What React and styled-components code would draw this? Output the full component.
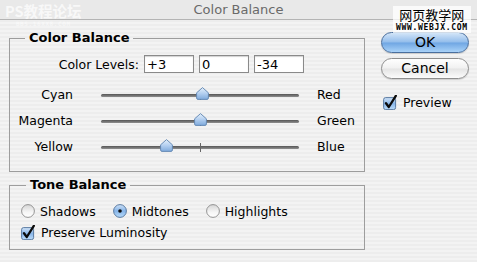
import React from 'react';
import styled, { createGlobalStyle } from 'styled-components';

const GlobalStyle = createGlobalStyle`
  html, body { margin: 0; padding: 0; }
  body { font-family: "DejaVu Sans", "Noto Sans CJK SC", sans-serif; }
`;

const Window = styled.div`
  position: relative;
  width: 477px;
  height: 262px;
  overflow: hidden;
  background: repeating-linear-gradient(to bottom, #ededed 0 2px, #f3f3f3 2px 4px);
  font-size: 12.5px;
  color: #000;
`;

const TitleBar = styled.div`
  height: 19px;
  border-bottom: 1px solid #b4b4b4;
  background: #e9e9e9;
  display: flex;
  align-items: center;
  justify-content: center;
  font-size: 13px;
  color: #6a6a6a;
`;

const Body = styled.div`
  display: flex;
  gap: 16px;
  padding: 10px 0 0 9px;
`;

const MainColumn = styled.div`
  width: 356px;
  display: flex;
  flex-direction: column;
  gap: 5px;
`;

const Group = styled.fieldset`
  margin: 0;
  min-width: 0;
  border: 1px solid #9d9d9d;
  padding: ${(p) => p.$pad};
`;

const GroupTitle = styled.legend`
  margin-left: ${(p) => p.$indent}px;
  padding: 0 4px;
  font-weight: bold;
  font-size: 13px;
  line-height: 16px;
`;

const LevelsRow = styled.div`
  display: grid;
  grid-template-columns: 129px 50px 50px 50px;
  column-gap: 5px;
  align-items: center;
  height: 18px;
  margin-bottom: 8px;
`;

const LevelsLabel = styled.span`
  justify-self: end;
`;

const LevelInput = styled.input`
  box-sizing: border-box;
  width: 50px;
  height: 18px;
  margin: 0;
  padding: 0 2px;
  border: 1px solid #8a8a8a;
  box-shadow: inset 0 1px 1px rgba(0, 0, 0, 0.18);
  background: #fff;
  font: inherit;
  font-size: 13px;
  color: #000;
  outline: none;
`;

const SliderRow = styled.div`
  display: flex;
  align-items: center;
  height: 26px;
`;

const SideLabel = styled.span`
  width: 63px;
  text-align: right;
`;

const Track = styled.div`
  position: relative;
  width: 198px;
  height: 3px;
  margin: 2px 0 0 28px;
  border-radius: 2px;
  background: linear-gradient(#555, #8f8f8f);
`;

const Tick = styled.span`
  position: absolute;
  left: 99px;
  top: -3px;
  width: 1px;
  height: 9px;
  background: #666;
`;

const ThumbWrap = styled.span`
  position: absolute;
  top: -7px;
  width: 13px;
  height: 13px;
  display: block;
`;

const ColorName = styled.span`
  margin-left: 18px;
`;

const OptionRow = styled.div`
  display: flex;
  align-items: center;
  gap: ${(p) => p.$gap || 0}px;
  height: 14px;
  margin-bottom: ${(p) => p.$below || 0}px;
  padding-left: ${(p) => p.$indent || 0}px;
`;

const Option = styled.label`
  display: flex;
  align-items: center;
  gap: 5px;
`;

const SideColumn = styled.div`
  width: 88px;
  display: flex;
  flex-direction: column;
  padding-top: 2px;
`;

const AquaButton = styled.button`
  box-sizing: border-box;
  width: 88px;
  height: 21px;
  margin: 0 0 5px;
  padding: 0;
  border-radius: 11px;
  font-family: inherit;
  font-size: 14px;
  line-height: 19px;
  color: #000;
  border: 1px solid ${(p) => (p.$primary ? '#4a6f9e' : '#8e8e8e')};
  background: ${(p) =>
    p.$primary
      ? 'linear-gradient(#d3e5f8 0%, #93bdeb 48%, #6fa6e3 52%, #a9d2f8 100%)'
      : 'linear-gradient(#ffffff 0%, #f1f1f1 48%, #e4e4e4 52%, #fbfbfb 100%)'};
  box-shadow: 0 1px 1px rgba(0, 0, 0, 0.15);
`;

const PreviewRow = styled.div`
  margin-top: 11px;
  padding-left: 2px;
`;

const Watermark = styled.div`
  position: absolute;
  top: ${(p) => p.$top}px;
  left: ${(p) => p.$left}px;
  display: flex;
  flex-direction: column;
  align-items: center;
  line-height: 1;
`;

const WatermarkCn = styled.span`
  font-family: "Noto Sans CJK SC", sans-serif;
  font-size: ${(p) => p.$size}px;
  font-weight: ${(p) => p.$weight || 400};
  line-height: ${(p) => p.$line || p.$size}px;
  color: ${(p) => p.$color};
`;

const WatermarkUrl = styled.span`
  margin-top: ${(p) => p.$gap}px;
  font-family: "DejaVu Sans Mono", monospace;
  font-weight: bold;
  font-size: ${(p) => p.$size}px;
  line-height: ${(p) => p.$size}px;
  letter-spacing: ${(p) => p.$spacing}px;
  color: ${(p) => p.$color};
`;

const SiteStamp = styled(Watermark)`
  background: rgba(255, 255, 255, 0.75);
  padding: 2px 3px 1px;
`;

function Thumb({ value }) {
  const center = ((value + 100) / 200) * 198;
  return (
    <ThumbWrap style={{ left: center - 6.5 }}>
      <svg width="13" height="13" viewBox="0 0 13 13">
        <defs>
          <linearGradient id="thumbFill" x1="0" y1="0" x2="0" y2="1">
            <stop offset="0" stopColor="#e4effa" />
            <stop offset="0.5" stopColor="#b3cff0" />
            <stop offset="1" stopColor="#7faadc" />
          </linearGradient>
        </defs>
        <path
          d="M6.5 0.6 L12.4 5.8 L12.4 11 Q12.4 12.4 11 12.4 L2 12.4 Q0.6 12.4 0.6 11 L0.6 5.8 Z"
          fill="url(#thumbFill)"
          stroke="#5f84b0"
          strokeWidth="0.9"
        />
      </svg>
    </ThumbWrap>
  );
}

function Slider({ left, right, value }) {
  return (
    <SliderRow>
      <SideLabel>{left}</SideLabel>
      <Track>
        <Tick />
        <Thumb value={value} />
      </Track>
      <ColorName>{right}</ColorName>
    </SliderRow>
  );
}

function Radio({ checked }) {
  return (
    <svg width="14" height="14" viewBox="0 0 14 14">
      <defs>
        <linearGradient id="radioOff" x1="0" y1="0" x2="0" y2="1">
          <stop offset="0" stopColor="#d5d5d5" />
          <stop offset="0.6" stopColor="#f6f6f6" />
          <stop offset="1" stopColor="#ffffff" />
        </linearGradient>
        <linearGradient id="radioOn" x1="0" y1="0" x2="0" y2="1">
          <stop offset="0" stopColor="#cfe2f7" />
          <stop offset="0.5" stopColor="#86b4e8" />
          <stop offset="1" stopColor="#b8dcfb" />
        </linearGradient>
      </defs>
      <circle
        cx="7"
        cy="7"
        r="6.4"
        fill={checked ? 'url(#radioOn)' : 'url(#radioOff)'}
        stroke={checked ? '#4d6f98' : '#8a8a8a'}
        strokeWidth="0.9"
      />
      {checked && <circle cx="7" cy="7" r="1.8" fill="#111" />}
    </svg>
  );
}

function CheckBox() {
  return (
    <svg width="15" height="15" viewBox="0 0 15 15">
      <defs>
        <linearGradient id="boxFill" x1="0" y1="0" x2="0" y2="1">
          <stop offset="0" stopColor="#d2e4f8" />
          <stop offset="0.5" stopColor="#89b6e9" />
          <stop offset="1" stopColor="#bcdcfa" />
        </linearGradient>
      </defs>
      <rect x="0.6" y="2.6" width="12" height="12" rx="2" fill="url(#boxFill)" stroke="#4d6f98" strokeWidth="0.9" />
      <path d="M3 8.2 L5.8 12 L12.8 0.8" fill="none" stroke="#0b0b0b" strokeWidth="2.3" strokeLinecap="round" strokeLinejoin="round" />
    </svg>
  );
}

export default function App() {
  return (
    <Window>
      <GlobalStyle />
      <TitleBar>Color Balance</TitleBar>
      <Body>
        <MainColumn>
          <Group $pad="9px 0 12px 0">
            <GroupTitle $indent={15}>Color Balance</GroupTitle>
            <LevelsRow>
              <LevelsLabel>Color Levels:</LevelsLabel>
              <LevelInput readOnly value="+3" />
              <LevelInput readOnly value="0" />
              <LevelInput readOnly value="-34" />
            </LevelsRow>
            <Slider left="Cyan" right="Red" value={3} />
            <Slider left="Magenta" right="Green" value={0} />
            <Slider left="Yellow" right="Blue" value={-34} />
          </Group>
          <Group $pad="11px 0 10px 0">
            <GroupTitle $indent={16}>Tone Balance</GroupTitle>
            <OptionRow $indent={11} $gap={17} $below={7}>
              <Option>
                <Radio />
                Shadows
              </Option>
              <Option>
                <Radio checked />
                Midtones
              </Option>
              <Option>
                <Radio />
                Highlights
              </Option>
            </OptionRow>
            <OptionRow $indent={11}>
              <Option>
                <CheckBox />
                Preserve Luminosity
              </Option>
            </OptionRow>
          </Group>
        </MainColumn>
        <SideColumn>
          <AquaButton $primary>OK</AquaButton>
          <AquaButton>Cancel</AquaButton>
          <PreviewRow>
            <Option>
              <CheckBox />
              Preview
            </Option>
          </PreviewRow>
        </SideColumn>
      </Body>
      <Watermark $top={0} $left={5}>
        <WatermarkCn $size={14.5} $line={21} $weight={700} $color="rgba(255,255,255,0.7)">PS教程论坛</WatermarkCn>
        <WatermarkUrl $gap={0} $size={6} $spacing={0.6} $color="rgba(255,255,255,0.5)">BBS.16XX8.COM</WatermarkUrl>
      </Watermark>
      <SiteStamp $top={6} $left={393}>
        <WatermarkCn $size={13} $color="#000">网页教学网</WatermarkCn>
        <WatermarkUrl $gap={3} $size={8} $spacing={0.7} $color="#000">WWW.WEBJX.COM</WatermarkUrl>
      </SiteStamp>
    </Window>
  );
}
